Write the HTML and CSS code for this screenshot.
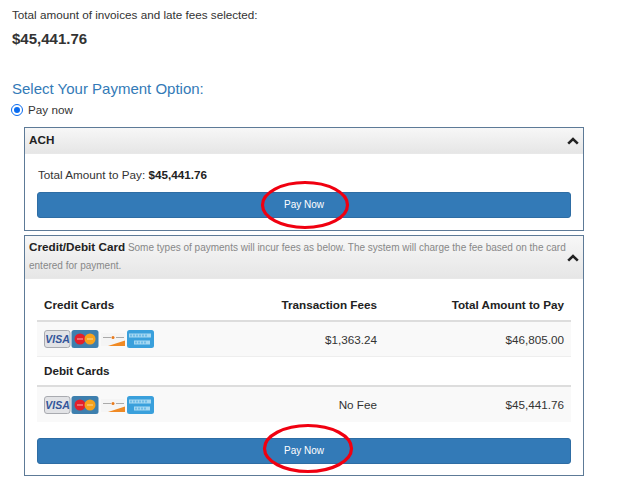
FILE: index.html
```html
<!DOCTYPE html>
<html lang="en">
<head>
<meta charset="utf-8">
<title>Payment</title>
<link rel="stylesheet" href="styles.css">
</head>
<body>
<main class="page">
  <p class="intro">Total amount of invoices and late fees selected:</p>
  <p class="total">$45,441.76</p>
  <h2 class="heading">Select Your Payment Option:</h2>
  <label class="radio"><span class="radio-dot"></span>Pay now</label>

  <section class="panel panel-ach">
    <header class="panel-head head-ach">
      <strong class="panel-title">ACH</strong>
      <svg class="chev" viewBox="0 0 12 8"><path d="M1.200 6.600 6 2l4.800 4.600" fill="none" stroke="#222" stroke-width="2.600"/></svg>
    </header>
    <div class="panel-body">
      <p class="amount">Total Amount to Pay: <strong>$45,441.76</strong></p>
      <button class="pay">Pay Now</button>
    </div>
  </section>

  <section class="panel panel-card">
    <header class="panel-head head-card">
      <p class="head-text"><strong class="panel-title">Credit/Debit Card</strong> Some types of payments will incur fees as below. The system will charge the fee based on the card entered for payment.</p>
      <svg class="chev chev-card" viewBox="0 0 12 8"><path d="M1.200 6.600 6 2l4.800 4.600" fill="none" stroke="#222" stroke-width="2.600"/></svg>
    </header>
    <div class="panel-body body-card">
      <div class="row row-head">
        <span class="c1">Credit Cards</span><span class="c2">Transaction Fees</span><span class="c3">Total Amount to Pay</span>
      </div>
      <div class="row row-data">
        <span class="c1 cards">
          <svg class="card-set" viewBox="0 0 110 18">
            <rect x=".5" y=".5" width="25.500" height="17" rx="2.500" fill="#e2e3e6" stroke="#a9abb0"/>
            <text x="13.500" y="13.200" class="visa">VISA</text>
            <rect x="27.500" y="0" width="27" height="18" rx="2.500" fill="#3d7fae"/>
            <circle cx="36" cy="9" r="5.500" fill="#e2202c"/><circle cx="46" cy="9" r="5.500" fill="#f6a21c"/>
            <rect x="33" y="8.500" width="6" height="1" fill="#f6b8b8"/><rect x="43" y="8.500" width="6" height="1" fill="#fbdc9c"/>
            <rect x="57" y="3" width="24" height="13" fill="#f5f5f5"/>
            <path d="M64 16 81 10.500V16z" fill="#f08a24"/><circle cx="69" cy="7.500" r="1.500" fill="#e87a1c"/>
            <rect x="59" y="7" width="8" height="1" fill="#aaa"/><rect x="72" y="7" width="8" height="1" fill="#aaa"/>
            <rect x="83" y="0" width="27" height="18" rx="2.500" fill="#3aa0dc"/>
            <rect x="85" y="3.500" width="22" height="4" fill="#a6d8f2"/><rect x="90" y="10.500" width="16" height="4" fill="#a6d8f2"/>
            <path d="M87 4.500v2M90 4.500v2M93 4.500v2M96 4.500v2M99 4.500v2M102 4.500v2M92 11.500v2M95 11.500v2M98 11.500v2M101 11.500v2" stroke="#3aa0dc"/>
          </svg>
        </span><span class="c2">$1,363.24</span><span class="c3">$46,805.00</span>
      </div>
      <div class="row row-head row-sub">
        <span class="c1">Debit Cards</span>
      </div>
      <div class="row row-data">
        <span class="c1 cards">
          <svg class="card-set" viewBox="0 0 110 18">
            <rect x=".5" y=".5" width="25.500" height="17" rx="2.500" fill="#e2e3e6" stroke="#a9abb0"/>
            <text x="13.500" y="13.200" class="visa">VISA</text>
            <rect x="27.500" y="0" width="27" height="18" rx="2.500" fill="#3d7fae"/>
            <circle cx="36" cy="9" r="5.500" fill="#e2202c"/><circle cx="46" cy="9" r="5.500" fill="#f6a21c"/>
            <rect x="33" y="8.500" width="6" height="1" fill="#f6b8b8"/><rect x="43" y="8.500" width="6" height="1" fill="#fbdc9c"/>
            <rect x="57" y="3" width="24" height="13" fill="#f5f5f5"/>
            <path d="M64 16 81 10.500V16z" fill="#f08a24"/><circle cx="69" cy="7.500" r="1.500" fill="#e87a1c"/>
            <rect x="59" y="7" width="8" height="1" fill="#aaa"/><rect x="72" y="7" width="8" height="1" fill="#aaa"/>
            <rect x="83" y="0" width="27" height="18" rx="2.500" fill="#3aa0dc"/>
            <rect x="85" y="3.500" width="22" height="4" fill="#a6d8f2"/><rect x="90" y="10.500" width="16" height="4" fill="#a6d8f2"/>
            <path d="M87 4.500v2M90 4.500v2M93 4.500v2M96 4.500v2M99 4.500v2M102 4.500v2M92 11.500v2M95 11.500v2M98 11.500v2M101 11.500v2" stroke="#3aa0dc"/>
          </svg>
        </span><span class="c2">No Fee</span><span class="c3">$45,441.76</span>
      </div>
      <button class="pay pay-card">Pay Now</button>
    </div>
  </section>

  <svg class="ring ring-a" viewBox="0 0 90 50"><ellipse cx="45" cy="25" rx="42.500" ry="22.500" fill="none" stroke="#f00010" stroke-width="3.200"/></svg>
  <svg class="ring ring-b" viewBox="0 0 92 51"><ellipse cx="46" cy="25.500" rx="43.500" ry="23" fill="none" stroke="#f00010" stroke-width="3.200"/></svg>
</main>
</body>
</html>
```
FILE: styles.css
```css
* { box-sizing: border-box; }
html, body { margin: 0; padding: 0; background: #fff; }
body { font-family: "Liberation Sans", Arial, sans-serif; font-size: 11.700px; color: #333; }
.page { position: relative; width: 624px; height: 479px; padding: 8px 40px 0 12px; overflow: hidden; }
p { margin: 0; }
.intro { line-height: 14px; }
.total { margin-top: 8px; font-size: 15px; font-weight: 700; line-height: 18px; }
.heading { margin: 32px 0 0; font-size: 15px; font-weight: 400; line-height: 18px; color: #337ab7; }
.radio { display: flex; align-items: center; gap: 6px; margin-top: 5px; line-height: 14px; }
.radio-dot { width: 10px; height: 10px; border-radius: 50%; background: #0a6cf0; border: 2px solid #fff; outline: 1px solid #0a6cf0; }
.panel { margin-left: 12px; width: 560px; border: 1px solid #5d7a97; }
.panel-ach { margin-top: 10px; height: 104px; }
.panel-card { margin-top: 4px; height: 241px; }
.panel-head { display: flex; justify-content: space-between; background: linear-gradient(#f7f7f7, #e6e6e6); border-bottom: 1px solid #e8e8e8; padding: 0 4px; }
.head-ach { height: 26px; align-items: center; padding-bottom: 2px; }
.head-card { height: 43px; align-items: flex-start; }
.panel-title { font-size: 11.700px; font-weight: 700; color: #222; }
.head-text { width: 538px; font-size: 10px; line-height: 18px; color: #888; padding-top: 2px; }
.chev { width: 12px; height: 8px; flex: none; }
.head-ach .chev { margin-top: 2px; }
.chev-card { margin-top: 18px; }
.panel-body { padding: 12px 12px 0; }
.amount { margin-top: 1px; margin-left: 1px; height: 25px; line-height: 16px; }
.amount strong { color: #222; }
.pay { display: block; width: 534px; height: 26px; padding: 0 0 2px; border: 1px solid #2e6da4; border-radius: 3px; background: #337ab7; color: #fff; font: 10px "Liberation Sans", Arial, sans-serif; }
.body-card { padding-top: 12px; }
.row { display: flex; align-items: center; width: 534px; padding: 0 7px; }
.row-head { height: 31px; padding-bottom: 2px; font-weight: 700; color: #222; border-bottom: 2px solid #ddd; }
.row-sub { height: 30px; background: #fff; }
.row-data { height: 35px; background: #f9f9f9; border-bottom: 1px solid #eee; }
.row-data:last-of-type { border-bottom: 0; }
.c1 { width: 180px; }
.c2 { width: 153px; text-align: right; }
.c3 { flex: 1; text-align: right; }
.cards { display: flex; }
.card-set { width: 110px; height: 18px; }
.visa { font: italic 700 10.500px "Liberation Sans", Arial, sans-serif; fill: #33559a; text-anchor: middle; }
.pay-card { margin-top: 16px; }
.ring { position: absolute; }
.ring-a { left: 260px; top: 180px; width: 90px; height: 50px; }
.ring-b { left: 262px; top: 423px; width: 92px; height: 51px; }
```
